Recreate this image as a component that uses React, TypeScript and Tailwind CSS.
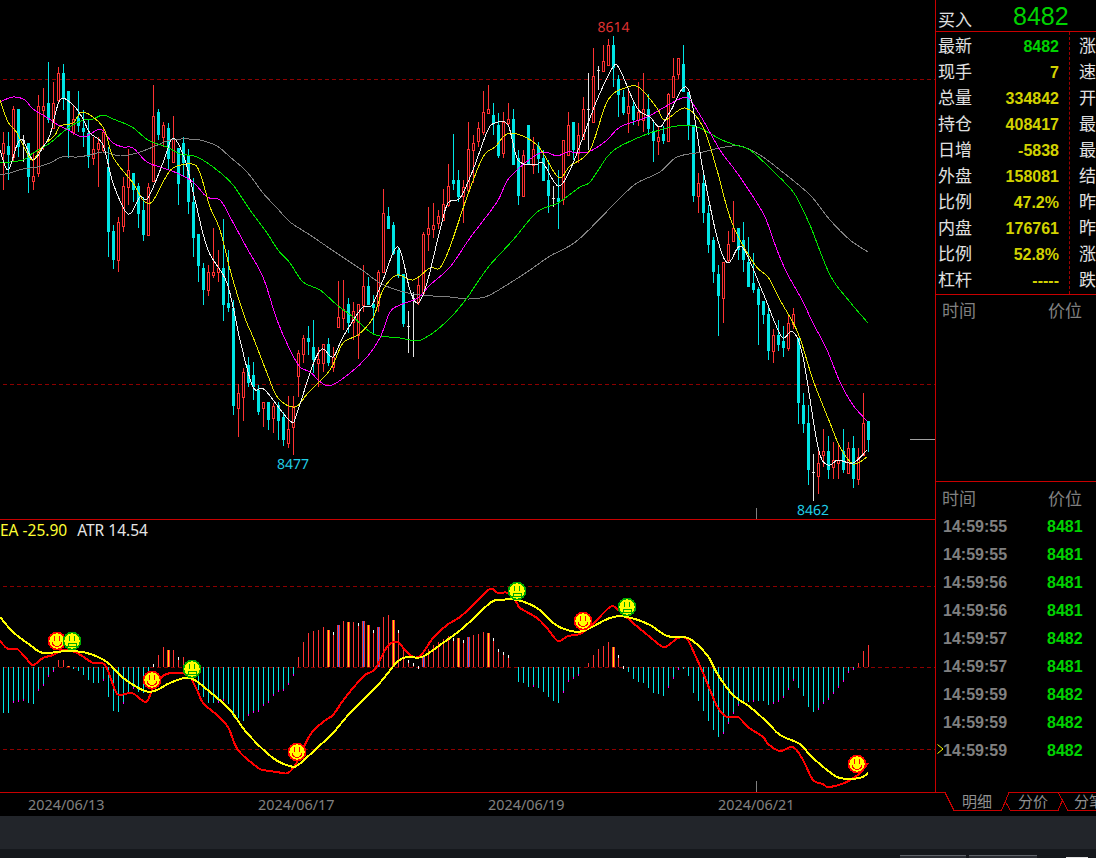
import React from "react";

type Pt = [number, number];
type Candle = [number, number, number, number, "r" | "c" | "w"];

const candles: Candle[] = [
  [132,143,153,190,"r"],[132,146,155,180,"c"],[106,109,157,162,"r"],[109,109,147,157,"c"],[135,140,140,162,"w"],
  [143,143,177,193,"c"],[153,176,181,190,"r"],[95,106,173,177,"r"],[88,106,110,150,"r"],[62,103,120,123,"c"],
  [82,103,128,128,"r"],[67,73,100,102,"r"],[64,73,98,110,"c"],[91,91,130,158,"c"],[105,119,132,135,"r"],
  [91,118,126,132,"c"],[110,128,132,147,"c"],[120,133,157,168,"c"],[137,149,158,165,"r"],[137,143,149,187,"r"],
  [127,132,150,152,"r"],[147,167,232,257,"c"],[225,231,260,269,"c"],[217,222,260,272,"r"],[177,186,226,232,"r"],
  [149,170,187,205,"r"],[173,173,190,202,"c"],[183,186,214,228,"c"],[197,210,235,241,"c"],[183,187,235,235,"r"],
  [85,116,181,181,"r"],[109,112,135,140,"c"],[122,125,137,147,"r"],[123,128,159,170,"c"],[116,138,162,162,"r"],
  [148,148,184,205,"c"],[137,143,163,177,"c"],[149,155,202,214,"c"],[178,202,238,257,"c"],[234,234,266,282,"c"],
  [263,268,290,305,"c"],[265,272,290,296,"r"],[228,272,275,278,"r"],[250,268,272,282,"r"],[219,268,305,321,"c"],
  [250,303,308,312,"c"],[300,308,406,415,"c"],[384,393,408,437,"r"],[368,372,397,421,"r"],[357,365,383,387,"c"],
  [362,375,387,400,"c"],[385,390,412,415,"c"],[402,402,408,427,"r"],[402,402,420,430,"c"],[403,406,418,433,"r"],
  [402,405,421,440,"c"],[412,417,440,446,"c"],[396,429,443,448,"r"],[396,406,427,455,"r"],[350,353,376,397,"r"],
  [335,338,354,363,"r"],[326,338,342,355,"c"],[320,347,360,373,"c"],[347,359,363,387,"r"],[344,344,363,372,"r"],
  [338,344,363,366,"c"],[347,357,367,372,"r"],[281,317,327,327,"r"],[280,309,318,330,"r"],[298,304,323,333,"c"],
  [302,311,322,340,"r"],[304,304,335,359,"r"],[265,286,305,312,"r"],[277,286,305,305,"c"],[295,304,308,333,"c"],
  [270,272,305,312,"r"],[189,213,272,272,"r"],[207,216,229,229,"c"],[222,225,254,255,"c"],[247,250,276,278,"c"],
  [274,274,324,327,"c"],[311,326,326,353,"w"],[292,298,298,357,"w"],[277,285,302,305,"r"],[232,234,293,293,"r"],
  [207,228,234,251,"r"],[203,225,229,238,"r"],[210,216,223,229,"r"],[189,204,220,220,"r"],[164,186,205,207,"r"],
  [134,180,184,190,"c"],[170,180,197,202,"c"],[180,187,196,223,"r"],[122,149,190,193,"r"],[135,143,150,183,"r"],
  [122,128,141,147,"r"],[91,112,132,135,"r"],[85,109,113,113,"r"],[103,115,123,135,"c"],[113,125,156,158,"c"],
  [112,122,153,158,"r"],[103,119,123,125,"r"],[109,119,165,165,"c"],[150,158,196,205,"c"],[150,155,196,196,"r"],
  [125,125,165,165,"c"],[137,149,165,174,"r"],[142,146,159,173,"c"],[150,158,181,181,"c"],[160,180,196,213,"c"],
  [186,198,198,207,"w"],[170,198,202,229,"c"],[140,140,199,205,"r"],[112,125,155,155,"r"],[122,122,150,160,"c"],
  [123,135,153,163,"r"],[97,109,139,140,"r"],[73,109,109,150,"w"],[48,76,122,123,"r"],[66,70,70,90,"w"],
  [45,61,71,72,"r"],[39,45,65,65,"r"],[36,45,68,87,"c"],[75,79,95,117,"c"],[90,97,113,115,"c"],
  [88,106,113,133,"r"],[100,106,120,125,"c"],[82,112,120,126,"r"],[73,109,120,132,"r"],[94,109,129,135,"c"],
  [120,131,141,162,"c"],[126,137,141,155,"r"],[126,134,141,144,"c"],[93,94,141,141,"r"],[58,76,97,97,"r"],
  [58,58,74,79,"r"],[45,64,92,92,"c"],[92,92,125,140,"c"],[125,125,196,202,"c"],[173,183,196,213,"r"],
  [170,183,213,223,"c"],[205,213,245,253,"c"],[237,240,272,283,"c"],[265,274,296,336,"c"],[262,262,298,323,"r"],
  [231,244,260,263,"r"],[201,228,241,241,"r"],[228,228,250,260,"c"],[222,240,260,272,"c"],[237,262,287,287,"c"],
  [253,283,290,293,"c"],[287,289,305,345,"c"],[301,301,315,324,"c"],[305,314,351,360,"c"],[329,335,351,363,"r"],
  [320,335,345,351,"c"],[326,341,348,357,"c"],[315,323,348,351,"r"],[308,314,324,329,"r"],[338,338,403,424,"c"],
  [393,405,424,433,"c"],[405,423,470,485,"c"],[454,472,472,501,"w"],[448,463,476,494,"r"],[429,451,455,467,"r"],
  [436,451,470,479,"c"],[442,460,467,479,"r"],[445,460,463,479,"r"],[429,451,470,473,"c"],[442,448,473,473,"r"],
  [436,448,479,488,"c"],[448,457,479,485,"r"],[393,423,455,455,"r"],[421,421,440,452,"c"],
];

const white: Pt[] = [[0,150],[8,170],[17,145],[23,140],[33,160],[43,147],[50,135],[60,100],[73,105],[82,117],[90,133],[103,145],[113,183],[128,214],[140,197],[148,198],[163,163],[173,138],[185,160],[195,200],[208,250],[227,283],[240,340],[253,387],[265,390],[290,421],[297,413],[312,367],[322,349],[333,357],[343,337],[362,308],[372,305],[383,280],[398,247],[410,290],[418,303],[427,283],[440,230],[448,203],[460,198],[473,170],[487,132],[495,123],[508,125],[518,160],[535,165],[543,163],[558,186],[570,170],[583,137],[597,100],[613,67],[620,70],[637,108],[650,117],[660,127],[670,112],[688,89],[703,170],[717,237],[728,263],[742,247],[763,293],[775,323],[783,338],[793,332],[803,357],[818,447],[828,465],[838,460],[853,463],[867,450]];
const yellow: Pt[] = [[0,100],[8,122],[17,133],[27,153],[33,160],[42,147],[55,135],[60,126],[73,123],[83,112],[103,127],[113,157],[133,183],[143,200],[152,202],[163,182],[173,168],[192,164],[200,173],[210,207],[220,230],[232,277],[245,318],[253,337],[267,373],[278,398],[295,407],[308,393],[330,370],[343,343],[358,335],[373,318],[383,290],[397,275],[413,280],[430,268],[440,268],[450,247],[467,197],[483,157],[495,147],[510,133],[537,145],[558,177],[570,166],[590,150],[608,100],[628,87],[640,88],[657,108],[665,120],[685,108],[703,127],[717,170],[732,223],[755,265],[768,277],[780,300],[798,333],[813,380],[830,423],[840,447],[853,464],[867,457]];
const magenta: Pt[] = [[0,102],[13,97],[25,100],[33,109],[48,118],[58,125],[68,130],[83,137],[97,130],[103,131],[113,143],[123,147],[133,148],[147,162],[163,168],[177,173],[193,182],[207,197],[220,200],[230,217],[248,250],[263,277],[277,320],[290,350],[300,367],[310,372],[328,386],[350,373],[367,357],[380,338],[390,312],[400,305],[418,298],[430,285],[450,267],[470,238],[497,202],[510,177],[540,153],[557,156],[568,152],[588,152],[607,140],[620,127],[647,117],[663,108],[682,98],[690,100],[703,120],[720,150],[735,170],[750,192],[765,217],[777,250],[787,273],[802,300],[813,323],[827,350],[840,382],[853,405],[867,421]];
const green: Pt[] = [[0,163],[23,160],[33,153],[50,143],[68,128],[83,120],[93,119],[103,115],[113,119],[132,127],[148,140],[167,147],[180,154],[197,157],[217,170],[233,185],[250,210],[267,233],[278,250],[290,263],[303,282],[320,290],[337,305],[353,317],[370,332],[380,336],[400,338],[417,341],[425,338],[437,330],[453,315],[467,298],[477,283],[490,265],[513,240],[537,212],[558,203],[580,187],[590,182],[607,157],[617,148],[633,140],[650,133],[677,126],[697,127],[720,139],[735,145],[750,150],[772,170],[790,188],[797,198],[810,225],[830,275],[850,302],[868,323]];
const gray: Pt[] = [[0,175],[10,173],[23,169],[37,167],[50,163],[62,157],[77,157],[90,155],[103,152],[120,156],[137,153],[153,147],[170,140],[187,139],[200,140],[217,146],[230,157],[247,172],[263,193],[277,208],[290,222],[310,235],[332,250],[362,270],[380,283],[400,291],[420,295],[450,297],[467,299],[480,298],[490,295],[510,283],[530,270],[550,256],[578,240],[620,198],[637,183],[660,172],[677,157],[703,152],[720,148],[740,146],[760,155],[780,170],[810,195],[830,220],[850,240],[868,252]];

const bars = [713,713,702,701,700,703,704,690,685,676,671,660,660,666,669,671,675,680,683,683,680,697,711,712,703,693,688,692,693,685,664,655,647,650,650,657,657,667,680,690,697,703,703,702,700,704,717,718,721,715,712,711,705,702,695,691,690,684,675,657,642,633,631,630,627,630,632,625,621,622,622,623,621,625,630,627,617,615,620,630,647,660,663,666,657,649,645,642,639,636,638,638,640,637,635,634,632,633,638,649,652,655,667,682,683,687,686,688,692,697,701,703,692,681,678,675,667,663,655,649,646,642,647,655,666,672,679,682,683,688,693,694,696,687,678,669,669,676,693,701,711,721,730,737,733,723,713,705,702,702,701,701,701,705,703,701,697,689,680,688,696,707,712,709,703,699,693,687,681,672,669,663,651,645];
const yellowBars = [13,33,65,69,73,78,91,97,122];
const blueBars = [67,72,75,84,93];

const dif: Pt[] = [[0,641],[8,649],[17,649],[25,657],[33,665],[43,658],[53,655],[63,650],[77,653],[93,663],[105,665],[115,690],[120,695],[132,693],[143,701],[148,700],[153,688],[163,676],[172,673],[188,675],[197,690],[203,703],[217,715],[228,727],[238,750],[257,767],[263,770],[277,772],[288,773],[297,762],[310,735],[323,722],[333,715],[342,702],[353,688],[365,675],[375,669],[387,647],[397,642],[410,655],[420,656],[433,638],[447,625],[460,617],[473,605],[490,589],[498,593],[508,593],[517,603],[520,608],[537,618],[547,628],[558,641],[568,636],[580,634],[592,625],[610,607],[617,609],[633,623],[650,637],[663,647],[670,644],[678,638],[687,639],[695,655],[703,673],[710,690],[718,708],[727,717],[738,717],[748,727],[763,737],[768,744],[780,751],[793,747],[803,760],[813,780],[823,784],[828,787],[842,784],[852,779],[860,773],[868,763]];
const dea: Pt[] = [[0,617],[13,632],[30,645],[43,653],[67,651],[87,653],[107,662],[122,677],[145,691],[157,690],[170,683],[190,678],[210,692],[230,710],[247,733],[273,758],[290,766],[298,765],[317,748],[333,733],[350,713],[378,685],[397,662],[407,657],[422,657],[440,645],[463,628],[490,603],[500,600],[517,600],[537,608],[553,623],[567,630],[583,631],[610,618],[627,617],[650,625],[667,636],[688,638],[707,655],[718,675],[733,695],[750,707],[767,722],[780,735],[800,744],[810,755],[827,770],[840,778],[860,778],[868,773]];

const faces: [number, number, boolean][] = [[57,641,true],[72,641,false],[152,680,true],[192,669,false],[297,752,true],[517,591,false],[583,621,true],[627,607,false],[857,764,true]];

const leftRows = [
  ["最新","8482","text-[#00d200]","涨"],["现手","7","text-[#d2d200]","速"],["总量","334842","text-[#d2d200]","开"],
  ["持仓","408417","text-[#d2d200]","最"],["日增","-5838","text-[#d2d200]","最"],["外盘","158081","text-[#d2d200]","结"],
  ["比例","47.2%","text-[#d2d200]","昨"],["内盘","176761","text-[#d2d200]","昨"],["比例","52.8%","text-[#d2d200]","涨"],
  ["杠杆","-----","text-[#d2d200]","跌"],
];
const ticks = [["14:59:55","8481"],["14:59:55","8481"],["14:59:56","8481"],["14:59:56","8481"],["14:59:57","8482"],["14:59:57","8481"],["14:59:59","8482"],["14:59:59","8482"],["14:59:59","8482"]];

// smooth path through the hand-read points
function smooth(p: Pt[]) {
  let d = `M${p[0][0]},${p[0][1]}`;
  for (let i = 0; i < p.length - 1; i++) {
    const a = p[Math.max(i - 1, 0)], b = p[i], c = p[i + 1], e = p[Math.min(i + 2, p.length - 1)];
    d += `C${b[0] + (c[0] - a[0]) / 6},${b[1] + (c[1] - a[1]) / 6} ${c[0] - (e[0] - b[0]) / 6},${c[1] - (e[1] - b[1]) / 6} ${c[0]},${c[1]}`;
  }
  return d;
}

function Dashed({ y }: { y: number }) {
  return <line x1={3} x2={935} y1={y + 0.5} y2={y + 0.5} stroke="#8c0000" strokeDasharray="4 3" />;
}

function Line({ p, color, w = 1 }: { p: Pt[]; color: string; w?: number }) {
  return <path d={smooth(p)} fill="none" stroke={color} strokeWidth={w} />;
}

function CandleMark({ c, i }: { c: Candle; i: number }) {
  const x = 3 + 5 * i;
  const [hi, top, bot, lo, k] = c;
  if (k === "w") {
    return (
      <g stroke="#e6e6e6">
        <line x1={x + 0.5} x2={x + 0.5} y1={hi} y2={lo} />
        <line x1={x - 1} x2={x + 2} y1={top + 0.5} y2={top + 0.5} />
      </g>
    );
  }
  if (k === "c") {
    return (
      <g>
        <line x1={x + 0.5} x2={x + 0.5} y1={hi} y2={lo} stroke="#00e6e6" />
        <rect x={x - 1} y={top} width={3} height={bot - top} fill="#00e6e6" />
      </g>
    );
  }
  return (
    <g stroke="#ff3232">
      <line x1={x + 0.5} x2={x + 0.5} y1={hi} y2={top} />
      <line x1={x + 0.5} x2={x + 0.5} y1={bot} y2={lo} />
      <rect x={x - 0.5} y={top + 0.5} width={2} height={bot - top} fill="#000" />
    </g>
  );
}

function Face({ x, y, happy }: { x: number; y: number; happy: boolean }) {
  const ink = happy ? "#ff0000" : "#00a800";
  return (
    <g transform={`translate(${x - 9},${y - 9})`}>
      <circle cx={9} cy={9} r={8.5} fill="#ffff00" stroke={ink} strokeWidth={1.5} />
      <rect x={6} y={4} width={1} height={5} fill={ink} />
      <rect x={11} y={4} width={1} height={5} fill={ink} />
      {happy ? (
        <path d="M4,10 Q5,14.5 9,14.5 Q13,14.5 14,10" fill="none" stroke={ink} strokeWidth={1} />
      ) : (
        <path d="M5,14 L5,11.5 L13,11.5 L13,14 M3,14.5 L15,14.5" fill="none" stroke={ink} strokeWidth={1} />
      )}
    </g>
  );
}

function MainChart() {
  return (
    <svg width={935} height={519} viewBox="0 0 935 519" shapeRendering="crispEdges" className="block">
      <Dashed y={79} />
      <Dashed y={384} />
      {candles.map((c, i) => <CandleMark key={i} c={c} i={i} />)}
      <Line p={gray} color="#808080" />
      <Line p={green} color="#00e600" />
      <Line p={magenta} color="#ff00ff" />
      <Line p={yellow} color="#e6e600" />
      <Line p={white} color="#f0f0f0" />
      <line x1={910} x2={935} y1={439.5} y2={439.5} stroke="#a0a0a0" />
      <line x1={756.5} x2={756.5} y1={508} y2={519} stroke="#808080" />
      <g fontSize={14} textAnchor="middle" className="font-['Noto_Sans',sans-serif]" textRendering="geometricPrecision">
        <text x={613.5} y={32} fill="#e03232">8614</text>
        <text x={293} y={469} fill="#20d0e8">8477</text>
        <text x={813} y={515} fill="#20d0e8">8462</text>
      </g>
    </svg>
  );
}

function MacdChart() {
  return (
    <div className="relative h-[272px]">
      <svg width={935} height={272} viewBox="0 520 935 272" shapeRendering="crispEdges" className="block">
        <Dashed y={586} />
        <Dashed y={667} />
        <Dashed y={749} />
        {bars.map((y, i) => {
          const x = 3 + 5 * i;
          const up = y < 667;
          const y1 = Math.min(y, 667);
          const h = Math.abs(y - 667);
          const prev = i > 0 ? bars[i - 1] : y;
          const shrinking = Math.abs(y - 667) < Math.abs(prev - 667);
          if (yellowBars.includes(i) || blueBars.includes(i)) {
            return (
              <g key={i}>
                <rect x={x - 1} y={y1} width={3} height={h} fill="#ff3232" />
                <rect x={x} y={y1} width={1} height={h} fill={yellowBars.includes(i) ? "#ffd800" : "#2a6cff"} />
              </g>
            );
          }
          return (
            <g key={i}>
              <rect x={x} y={y1} width={1} height={h} fill={up ? "#ff3232" : "#00e6e6"} />
              {shrinking && h > 0 && <rect x={x} y={up ? y1 : y1 + h - 1} width={1} height={up ? 3 : 2} fill={up ? "#fff" : "#ff00ff"} />}
            </g>
          );
        })}
        <Line p={dif} color="#ff0000" w={2} />
        <Line p={dea} color="#ffff00" w={2} />
        {faces.map(([x, y, happy], i) => <Face key={i} x={x} y={y} happy={happy} />)}
        <line x1={756.5} x2={756.5} y1={781} y2={792} stroke="#808080" />
      </svg>
      <div className="absolute left-0 top-0 flex gap-[10px] text-[15.5px] leading-[20px] font-['Noto_Sans',sans-serif]">
        <span className="text-[#ffff33]">EA -25.90</span>
        <span className="text-[#e6e6e6]">ATR 14.54</span>
      </div>
    </div>
  );
}

function RightPanel() {
  return (
    <div className="w-[161px] border-l border-[#c80000] font-['Liberation_Sans','Noto_Sans_CJK_SC',sans-serif]">
      <div className="flex h-[32px] items-center border-b border-[#c80000] pl-[2px]">
        <span className="w-[75px] pt-[10px] text-[17px] leading-[24px] text-[#e0e0e0]">买入</span>
        <span className="text-[25px] leading-[30px] text-[#00d200]">8482</span>
      </div>
      <div className="flex h-[263px] items-start border-b border-[#c80000]">
        <div className="h-full w-[134px] border-r border-dashed border-[#a00000]">
          {leftRows.map((r, i) => (
            <div key={i} className="flex h-[26px] items-center justify-between pl-[2px] pr-[10px] pt-[4px]">
              <span className="text-[17px] leading-[22px] text-[#e0e0e0]">{r[0]}</span>
              <span className={`text-[16px] leading-[22px] font-bold ${r[2]}`}>{r[1]}</span>
            </div>
          ))}
        </div>
        <div className="overflow-hidden pl-[9px]">
          {leftRows.map((r, i) => (
            <div key={i} className="flex h-[26px] items-center pt-[4px] text-[17px] leading-[22px] text-[#e0e0e0]">{r[3]}</div>
          ))}
        </div>
      </div>
      <div className="h-[187px] border-b border-[#c80000]">
        <div className="flex h-[30px] items-center pt-[4px] text-[17px] leading-[26px] text-[#808080]">
          <span className="w-[112px] pl-[6px]">时间</span>
          <span>价位</span>
        </div>
      </div>
      <div className="flex h-[29px] items-center pt-[6px] text-[17px] leading-[23px] text-[#808080]">
        <span className="w-[112px] pl-[6px]">时间</span>
        <span>价位</span>
      </div>
      {ticks.map((t, i) => (
        <div key={i} className="relative flex h-[28px] items-center pt-[4px] text-[16px] leading-[24px] font-bold">
          {i === ticks.length - 1 && (
            <svg width={7} height={10} viewBox="0 0 7 10" className="absolute left-[1px] top-[9px]">
              <path d="M0.5,0.5 L6,5 L0.5,9.5" fill="none" stroke="#ffff00" />
            </svg>
          )}
          <span className="w-[111px] pl-[7px] text-[#808080]">{t[0]}</span>
          <span className="text-[#00d200]">{t[1]}</span>
        </div>
      ))}
    </div>
  );
}

function Tabs() {
  return (
    <div className="relative h-[24px] w-[151px] shrink-0 overflow-hidden">
      <svg width={151} height={24} viewBox="0 0 151 24" shapeRendering="crispEdges" className="absolute inset-0">
        <path d="M0,0.5 L9,18.5 L56.5,18.5 L64,0.5 L151,0.5 M60,9 L65.5,18.5 L113,18.5 L118,7 M113,0.5 L123,18.5 L151,18.5" fill="none" stroke="#c80000" />
      </svg>
      <div className="relative flex h-[18px] items-center gap-[26px] whitespace-nowrap pl-[17px] text-[15px] leading-[18px] text-[#909090] font-['Noto_Sans_CJK_SC',sans-serif]">
        <span className="shrink-0">明细</span>
        <span className="shrink-0">分价</span>
        <span className="shrink-0">分笔</span>
      </div>
    </div>
  );
}

export default function App() {
  return (
    <div className="flex h-[858px] w-[1096px] flex-col overflow-hidden bg-black">
      <div className="flex h-[792px]">
        <div className="w-[935px]">
          <div className="h-[520px] border-b border-[#c80000]">
            <MainChart />
          </div>
          <MacdChart />
        </div>
        <RightPanel />
      </div>
      <div className="flex h-[24px]">
        <div className="flex w-[945px] border-t border-[#c80000] pl-[28px] text-[14.4px] leading-[24px] text-[#808080] font-['Noto_Sans',sans-serif]">
          {["2024/06/13", "2024/06/17", "2024/06/19", "2024/06/21"].map((d) => (
            <span key={d} className="w-[230px] shrink-0">{d}</span>
          ))}
        </div>
        <Tabs />
      </div>
      <div className="h-[33px] bg-[#22252a]" />
      <div className="flex h-[9px] items-end bg-[#15181c] pl-[900px]">
        <div className="h-[3px] w-[66px] shrink-0 border-t border-[#60646a] bg-[#2a2d33]" />
        <div className="ml-[3px] h-[3px] w-[68px] shrink-0 border-t border-[#60646a] bg-[#2a2d33]" />
        <div className="ml-[29px] h-[1px] w-[22px] shrink-0 bg-[#e0e0e0]" />
      </div>
    </div>
  );
}
